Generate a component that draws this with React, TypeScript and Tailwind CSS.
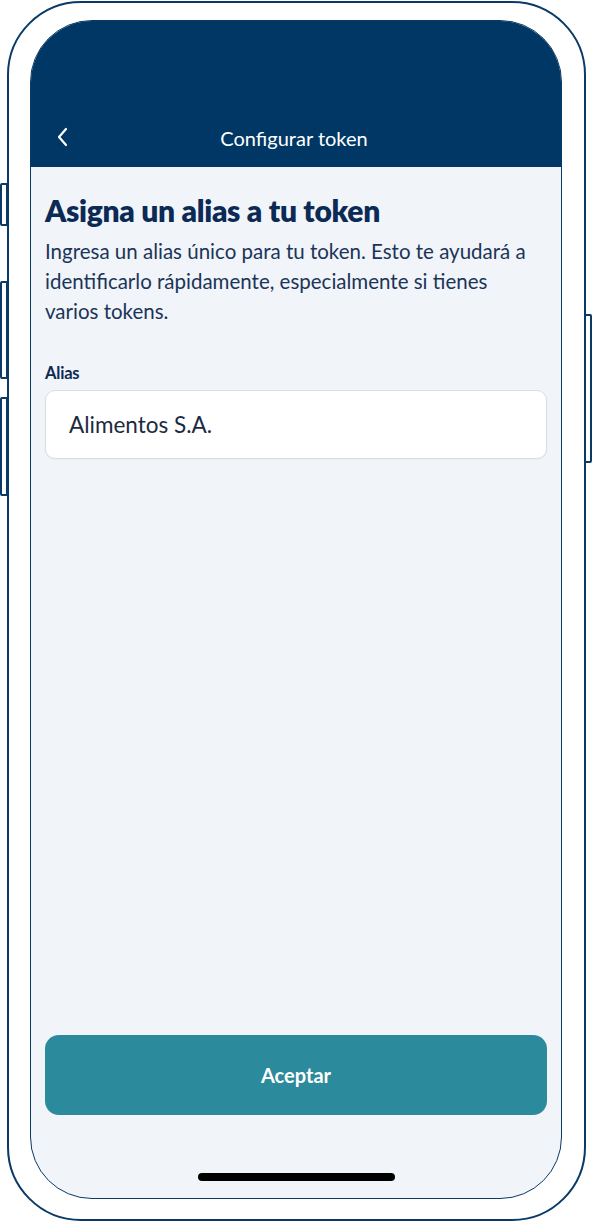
import React from 'react';

const font = { fontFamily: 'Lato, "Noto Sans", sans-serif' };

export default function App() {
  return (
    <div className="relative w-[592px] h-[1222px] bg-white overflow-hidden" style={font}>
      {/* side buttons */}
      <div className="absolute left-0 top-[183px] w-[8px] h-[43px] border-2 border-[#0a3a66] rounded-l-[2px]" />
      <div className="absolute left-0 top-[281px] w-[8px] h-[98px] border-2 border-[#0a3a66] rounded-l-[2px]" />
      <div className="absolute left-0 top-[397px] w-[8px] h-[99px] border-2 border-[#0a3a66] rounded-l-[2px]" />
      <div className="absolute right-0 top-[314px] w-[9px] h-[149px] border-2 border-[#0a3a66] rounded-r-[2px]" />

      <div className="relative ml-[7px] mt-[1px] w-[579px] h-[1220px] bg-white border-2 border-[#0a3a66] rounded-[74px] pl-[21px] pr-[22px] pt-[17px] pb-[20px]">
        <div className="h-full flex flex-col border-[1.5px] border-[#0a3a66] rounded-[62px] overflow-hidden bg-[#f1f4f8]">
          {/* header */}
          <div className="h-[146px] bg-[#003764] flex items-end pb-[16px] px-[22px] relative shrink-0">
            <svg width="14" height="22" viewBox="0 0 14 22" className="absolute left-[25px] bottom-[19px]">
              <path d="M10 3 L3 11 L10 19" fill="none" stroke="white" strokeWidth="2.2" strokeLinecap="round" strokeLinejoin="round" />
            </svg>
            <div className="flex-1 text-center text-white text-[20px] leading-[26px] pr-[4px]">Configurar token</div>
          </div>

          {/* content */}
          <div className="flex-1 flex flex-col px-[14px] pt-[25px]">
            <h1 className="text-[30px] leading-[36px] font-extrabold text-[#0b2a55] tracking-[-0.3px]">Asigna un alias a tu token</h1>
            <p className="mt-[8px] text-[20.5px] leading-[30px] text-[#1b3558] pr-[14px]">
              Ingresa un alias único para tu token. Esto te ayudará a identificarlo rápidamente, especialmente si tienes varios tokens.
            </p>
            <div className="mt-[37px] text-[16.5px] leading-[20px] font-bold text-[#0b2a55] tracking-[-0.2px]">Alias</div>
            <div className="mt-[7px] h-[69px] bg-white border border-[#d9dee5] rounded-[10px] shadow-[0_1px_2px_rgba(0,0,0,0.04)] flex items-center px-[23px] text-[22.5px] text-[#1b2a40]">
              Alimentos S.A.
            </div>

            <div className="flex-1" />

            <button className="h-[80px] rounded-[14px] bg-[#2b8a9b] text-white text-[20px] font-bold">Aceptar</button>

            <div className="h-[83px] flex items-end justify-center pb-[17px]">
              <div className="w-[197px] h-[8px] rounded-full bg-black" />
            </div>
          </div>
        </div>
      </div>
    </div>
  );
}
